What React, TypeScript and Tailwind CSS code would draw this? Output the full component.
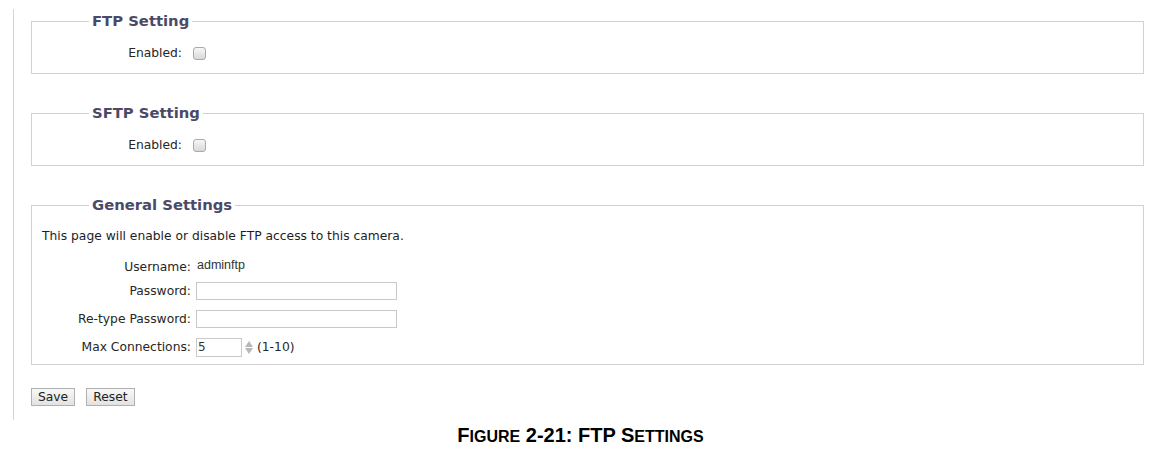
import React from 'react'

const VERDANA = 'font-["DejaVu_Sans",Verdana,sans-serif]'

function Checkbox() {
  return (
    <input
      type="checkbox"
      className="appearance-none w-[13px] h-[13px] rounded-[3px] border border-[#a9a9a9] bg-gradient-to-b from-[#f6f6f6] to-[#d9d9d9] m-0"
    />
  )
}

function Legend({ children }: { children: React.ReactNode }) {
  return (
    <legend className="ml-[57px] px-[3px] text-[14.8px] leading-[18px] font-bold text-[#4a4a68]">
      {children}
    </legend>
  )
}

function EnabledSet({ title }: { title: string }) {
  return (
    <fieldset className="border border-[#d2d2d2] pb-[9px] min-w-0">
      <Legend>{title}</Legend>
      <div className="flex items-center h-[22px] mt-[12px]">
        <span className="w-[161px] text-right pr-[11px] text-[12.3px] text-[#262626]">Enabled:</span>
        <Checkbox />
      </div>
    </fieldset>
  )
}

function Row({ label, short, children }: { label: string; short?: boolean; children: React.ReactNode }) {
  return (
    <div className={short ? 'flex items-center h-[21px]' : 'flex items-center h-[28px]'}>
      <span className="w-[159px] text-right pr-[5px] text-[12.3px] text-[#262626]">{label}</span>
      <div className="flex items-center">{children}</div>
    </div>
  )
}

export default function App() {
  return (
    <div className={`w-[1151px] h-[460px] bg-white ${VERDANA}`}>
      <div className="flex h-[420px] pt-[9px]">
        {/* left rule */}
        <div className="ml-[13px] w-px bg-[#d4d4d4]" />

        <div className="ml-[17px] w-[1113px] pt-[3px]">
          <EnabledSet title="FTP Setting" />

          <div className="mt-[30px]">
            <EnabledSet title="SFTP Setting" />
          </div>

          <fieldset className="mt-[30px] border border-[#d2d2d2] pb-[3px] min-w-0">
            <Legend>General Settings</Legend>
            <p className="pl-[10px] mt-[13px] text-[12.3px] text-[#1e1e1e]">
              This page will enable or disable FTP access to this camera.
            </p>
            <div className="mt-[11px] pl-[5px]">
              <Row label="Username:" short>
                <span className="pl-[1px] -mt-[3px] text-[12.5px] text-[#333] font-['Liberation_Sans',Arial,sans-serif]">adminftp</span>
              </Row>
              <Row label="Password:">
                <input type="password" className="w-[201px] h-[18px] border border-[#c9c9c9] bg-white" />
              </Row>
              <Row label="Re-type Password:">
                <input type="password" className="w-[201px] h-[18px] border border-[#c9c9c9] bg-white" />
              </Row>
              <Row label="Max Connections:">
                <input
                  defaultValue="5"
                  className="w-[46px] h-[19px] border border-[#c9c9c9] bg-white px-[1px] text-[12px] text-[#333]"
                />
                <span className="flex flex-col items-center ml-[2px] w-[10px] gap-[1px]">
                  <svg width="8" height="6" viewBox="0 0 8 6">
                    <path d="M4 0 L8 6 L0 6 Z" fill="#b8b8b8" />
                  </svg>
                  <svg width="8" height="6" viewBox="0 0 8 6">
                    <path d="M0 0 L8 0 L4 6 Z" fill="#b8b8b8" />
                  </svg>
                </span>
                <span className="ml-[3px] text-[12.3px] text-[#262626]">(1-10)</span>
              </Row>
            </div>
          </fieldset>

          <div className="flex gap-[11px] mt-[23px]">
            <button className="h-[18px] px-[6px] border border-[#b0b0b0] bg-gradient-to-b from-[#f8f8f8] to-[#e2e2e2] text-[12.3px] leading-[16px] text-[#222]">
              Save
            </button>
            <button className="h-[18px] px-[6px] border border-[#b0b0b0] bg-gradient-to-b from-[#f8f8f8] to-[#e2e2e2] text-[12.3px] leading-[16px] text-[#222]">
              Reset
            </button>
          </div>
        </div>
      </div>

      <div className="flex justify-center pl-[10px] mt-[3px]">
        <p className="font-['Liberation_Sans',Arial,sans-serif] font-bold text-[20px] leading-[24px] text-black">
          F<span className="text-[16px]">IGURE</span> 2-21: FTP S<span className="text-[16px]">ETTINGS</span>
        </p>
      </div>
    </div>
  )
}
